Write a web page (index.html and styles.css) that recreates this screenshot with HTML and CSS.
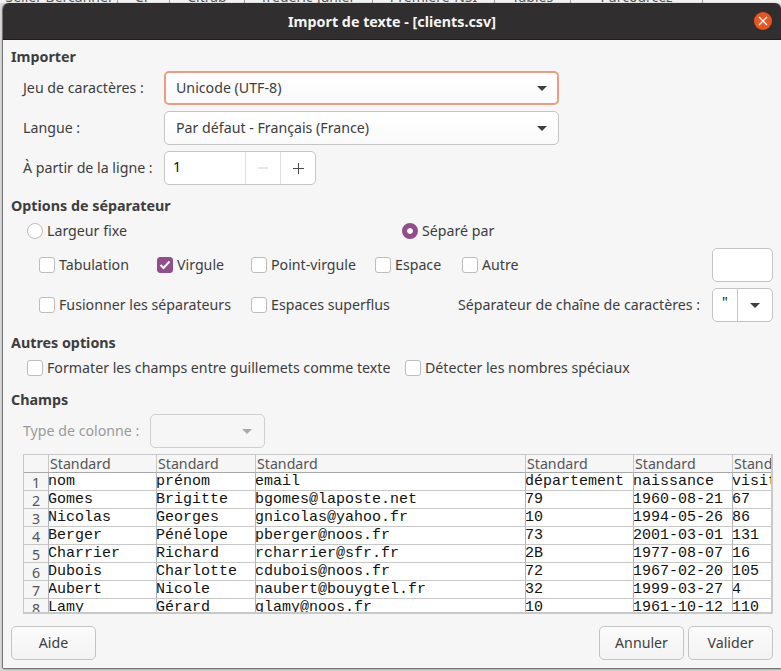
FILE: index.html
```html
<!DOCTYPE html>
<html lang="fr">
<head>
    <meta charset="UTF-8">
    <title>Import de texte - [clients.csv]</title>
    <link rel="stylesheet" href="styles.css">
</head>
<body>

<!-- Window behind the dialog, only its bottom edge shows -->
<div class="behind">
    <span class="behind-tab tab-a">Sélier Bercannel</span>
    <span class="behind-tab tab-b">CP</span>
    <span class="behind-tab tab-c">Citrab</span>
    <span class="behind-tab tab-d">frederic-junier</span>
    <span class="behind-tab tab-e">Premiere-NSI</span>
    <span class="behind-tab tab-f">Tables</span>
    <span class="behind-tab tab-g">Parcourcez</span>
</div>

<div class="dialog">
    <header class="titlebar">
        <span class="title">Import de texte - [clients.csv]</span>
        <span class="close">
            <svg width="10" height="10" viewBox="0 0 10 10"><path d="M1 1l8 8M9 1l-8 8" stroke="#fff" stroke-width="1.3" fill="none"/></svg>
        </span>
    </header>

    <main class="content">
        <h3 class="section first">Importer</h3>
        <div class="import-grid">
            <label>Jeu de caractères :</label>
            <div class="combo focused"><span>Unicode (UTF-8)</span><i class="arrow"></i></div>
            <label>Langue :</label>
            <div class="combo"><span>Par défaut - Français (France)</span><i class="arrow"></i></div>
            <label>À partir de la ligne :</label>
            <div class="spin">
                <span class="spin-value">1</span>
                <span class="spin-btn disabled">
                    <svg width="16" height="16" viewBox="0 0 16 16"><path d="M3 8h10" stroke="#cfcfcf" fill="none"/></svg>
                </span>
                <span class="spin-btn">
                    <svg width="16" height="16" viewBox="0 0 16 16"><path d="M3 8.5h11M8.500 3v11" stroke="#4a4a4a" fill="none"/></svg>
                </span>
            </div>
        </div>

        <h3 class="section sep-title">Options de séparateur</h3>
        <div class="radio-row">
            <label class="opt radio-fixed"><i class="radio"></i>Largeur fixe</label>
            <label class="opt"><i class="radio on"></i>Séparé par</label>
        </div>
        <div class="sep-grid">
            <label class="opt"><i class="check"></i>Tabulation</label>
            <label class="opt"><i class="check on"><svg width="12" height="12" viewBox="0 0 12 12"><path d="M1.500 6l3 3 6-6.500" stroke="#fff" stroke-width="2" fill="none"/></svg></i>Virgule</label>
            <label class="opt"><i class="check"></i>Point-virgule</label>
            <label class="opt"><i class="check"></i>Espace</label>
            <label class="opt"><i class="check"></i>Autre</label>
            <div class="entry"></div>

            <label class="opt merge"><i class="check"></i>Fusionner les séparateurs</label>
            <label class="opt"><i class="check"></i>Espaces superflus</label>
            <label class="quote-label">Séparateur de chaîne de caractères :</label>
            <div class="quote-combo"><span class="quote-value">"</span><span class="quote-btn"><i class="arrow"></i></span></div>
        </div>

        <h3 class="section other-title">Autres options</h3>
        <div class="other-row">
            <label class="opt"><i class="check"></i>Formater les champs entre guillemets comme texte</label>
            <label class="opt"><i class="check"></i>Détecter les nombres spéciaux</label>
        </div>

        <h3 class="section fields-title">Champs</h3>
        <div class="type-row">
            <label class="muted">Type de colonne :</label>
            <div class="combo off"><i class="arrow"></i></div>
        </div>

        <div class="grid-wrap">
            <table class="csv">
                <colgroup>
                    <col class="c-num"><col class="c-nom"><col class="c-prenom"><col class="c-email">
                    <col class="c-dep"><col class="c-date"><col class="c-visit">
                </colgroup>
                <thead>
                    <tr><th></th><th>Standard</th><th>Standard</th><th>Standard</th><th>Standard</th><th>Standard</th><th>Standard</th></tr>
                </thead>
                <tbody>
                    <tr><th>1</th><td>nom</td><td>prénom</td><td>email</td><td>département</td><td>naissance</td><td>visites</td></tr>
                    <tr><th>2</th><td>Gomes</td><td>Brigitte</td><td>bgomes@laposte.net</td><td>79</td><td>1960-08-21</td><td>67</td></tr>
                    <tr><th>3</th><td>Nicolas</td><td>Georges</td><td>gnicolas@yahoo.fr</td><td>10</td><td>1994-05-26</td><td>86</td></tr>
                    <tr><th>4</th><td>Berger</td><td>Pénélope</td><td>pberger@noos.fr</td><td>73</td><td>2001-03-01</td><td>131</td></tr>
                    <tr><th>5</th><td>Charrier</td><td>Richard</td><td>rcharrier@sfr.fr</td><td>2B</td><td>1977-08-07</td><td>16</td></tr>
                    <tr><th>6</th><td>Dubois</td><td>Charlotte</td><td>cdubois@noos.fr</td><td>72</td><td>1967-02-20</td><td>105</td></tr>
                    <tr><th>7</th><td>Aubert</td><td>Nicole</td><td>naubert@bouygtel.fr</td><td>32</td><td>1999-03-27</td><td>4</td></tr>
                    <tr><th>8</th><td>Lamy</td><td>Gérard</td><td>glamy@noos.fr</td><td>10</td><td>1961-10-12</td><td>110</td></tr>
                </tbody>
            </table>
        </div>

        <footer class="buttons">
            <button type="button">Aide</button>
            <span class="spacer"></span>
            <button type="button">Annuler</button>
            <button type="button">Valider</button>
        </footer>
    </main>
</div>

</body>
</html>
```

FILE: styles.css
```css
/* Global styles */
body {
    margin: 0;
    width: 781px;
    height: 671px;
    overflow: hidden;
    position: relative;
    background: #d9d9d9;
    font-family: 'Noto Sans', sans-serif;
    font-size: 14.2px;
    color: #3d3d3d;
}

/* Window behind */
.behind {
    position: absolute;
    top: -10px;
    left: 0;
    display: flex;
    height: 13px;
    width: 781px;
    background: #f2f2f2;
    font-size: 14px;
    line-height: 13px;
    color: #555;
    overflow: hidden;
}

.behind-tab {
    box-sizing: border-box;
    border-right: 1px solid #9a9a9a;
    white-space: nowrap;
    text-align: center;
}

.tab-a { width: 118px; }
.tab-b { width: 52px; }
.tab-c { width: 75px; }
.tab-d { width: 128px; }
.tab-e { width: 122px; }
.tab-f { width: 76px; }
.tab-g { width: 132px; }

/* Dialog window */
.dialog {
    position: absolute;
    top: 3px;
    left: 3px;
    width: 778px;
    height: 665px;
    display: flex;
    flex-direction: column;
    border-radius: 6px 6px 0 0;
    overflow: hidden;
    box-shadow: 0 1px 2px rgba(0, 0, 0, 0.6), -1px 0 1px rgba(0, 0, 0, 0.4);
}

.titlebar {
    flex: none;
    height: 36px;
    display: flex;
    align-items: center;
    justify-content: center;
    position: relative;
    background: #302e2f;
    border-bottom: 1px solid #1f1e1e;
}

.title {
    color: #f5f5f5;
    font-size: 14.3px;
    font-weight: 700;
}

.close {
    position: absolute;
    right: 9px;
    top: 9px;
    width: 18px;
    height: 18px;
    border-radius: 50%;
    background: #e95420;
    display: flex;
    align-items: center;
    justify-content: center;
}

.content {
    flex: 1;
    background: #f6f6f6;
    padding: 8px 8px 0 8px;
}

/* Section titles */
.section {
    margin: 0;
    height: 18px;
    line-height: 18px;
    font-size: 14.3px;
    font-weight: 700;
}

.import-grid {
    margin: 5px 0 0 12px;
    display: grid;
    grid-template-columns: 141px 395px;
    grid-auto-rows: 34px;
    row-gap: 6px;
    align-items: center;
}

.import-grid label,
.type-row label,
.quote-label {
    padding-bottom: 2px;
}

.sep-title { margin-top: 12px; }
.other-title { margin-top: 12px; }
.fields-title { margin-top: 14px; }

/* Combos */
.combo {
    box-sizing: border-box;
    height: 34px;
    display: flex;
    align-items: center;
    justify-content: space-between;
    padding: 0 11px 0 11px;
    background: linear-gradient(#ffffff, #fafafa);
    border: 1px solid #c4c4c4;
    border-radius: 5px;
}

.combo span {
    padding-bottom: 2px;
}

.combo.focused {
    border: 2px solid #ec9c83;
    padding: 0 10px 0 10px;
}

.combo.off {
    justify-content: flex-end;
    background: #f6f6f6;
    border-color: #cfcfcf;
    padding-right: 12px;
}

.combo.off .arrow {
    border-top-color: #a8a8a8;
}

.arrow {
    display: block;
    width: 0;
    height: 0;
    border-left: 5px solid transparent;
    border-right: 5px solid transparent;
    border-top: 5px solid #3d3d3d;
}

.spin {
    box-sizing: border-box;
    width: 152px;
    height: 34px;
    display: flex;
    background: #fff;
    border: 1px solid #c4c4c4;
    border-radius: 5px;
}

.spin-value {
    box-sizing: border-box;
    width: 80px;
    padding-left: 8px;
    line-height: 30px;
    color: #111;
}

.spin-btn {
    flex: 1;
    display: flex;
    align-items: center;
    justify-content: center;
    border-left: 1px solid #dedede;
}

/* Options */
.opt {
    display: flex;
    align-items: flex-start;
    gap: 4px;
    line-height: 16px;
    white-space: nowrap;
}

.radio-row {
    margin: 7px 0 0 16px;
    height: 18px;
    display: grid;
    grid-template-columns: 375px auto;
    align-items: center;
}

.radio {
    flex: none;
    box-sizing: border-box;
    width: 16px;
    height: 16px;
    border-radius: 50%;
    background: #fff;
    border: 1px solid #bdbdbd;
    display: block;
}

.radio.on {
    background: #924d8b;
    border: 5px solid #924d8b;
    box-shadow: inset 0 0 0 3px #fff;
}

.check {
    flex: none;
    box-sizing: border-box;
    width: 16px;
    height: 16px;
    border-radius: 3px;
    background: #fff;
    border: 1px solid #bdbdbd;
    display: flex;
    align-items: center;
    justify-content: center;
}

.check.on {
    background: #924d8b;
    border-color: #924d8b;
}

.sep-grid {
    margin: 8px 0 0 28px;
    display: grid;
    grid-template-columns: 118px 94px 124px 87px 250px 61px;
    grid-auto-rows: 34px;
    row-gap: 6px;
    align-items: center;
}

.merge { grid-column: span 2; }

.quote-label {
    grid-column: 4 / span 2;
    justify-self: end;
    margin-right: 12px;
    white-space: nowrap;
}

.entry,
.quote-combo {
    box-sizing: border-box;
    height: 34px;
    background: #fff;
    border: 1px solid #c4c4c4;
    border-radius: 5px;
}

.quote-combo {
    display: flex;
}

.quote-value {
    width: 24px;
    text-align: center;
    line-height: 26px;
    color: #111;
    border-right: 1px solid #c4c4c4;
}

.quote-btn {
    flex: 1;
    display: flex;
    align-items: center;
    justify-content: center;
}

.other-row {
    margin: 7px 0 0 16px;
    height: 18px;
    display: grid;
    grid-template-columns: 378px auto;
    align-items: center;
}

.type-row {
    margin: 5px 0 0 12px;
    display: grid;
    grid-template-columns: 127px 115px;
    align-items: center;
}

.muted {
    color: #9a9a9a;
}

/* CSV preview */
.grid-wrap {
    box-sizing: border-box;
    margin: 6px 0 0 12px;
    width: 750px;
    height: 160px;
    overflow: hidden;
    background: #fff;
    border: 1px solid #c8c8c8;
    border-bottom-width: 2px;
    border-right-width: 2px;
}

.csv {
    table-layout: fixed;
    width: 760px;
    border-collapse: separate;
    border-spacing: 0;
}

.c-num { width: 24px; }
.c-nom { width: 108px; }
.c-prenom { width: 99px; }
.c-email { width: 270px; }
.c-dep { width: 108px; }
.c-date { width: 99px; }
.c-visit { width: 52px; }

.csv thead th {
    box-sizing: border-box;
    height: 18px;
    padding: 0 0 0 1px;
    background: #f6f6f6;
    border-left: 1px solid #c8c8c8;
    border-bottom: 1px solid #a8a8a8;
    font-size: 14.2px;
    font-weight: 400;
    line-height: 17px;
    text-align: left;
    color: #555;
    overflow: hidden;
    white-space: nowrap;
}

.csv thead th:first-child {
    border-left: none;
}

.csv tbody th {
    box-sizing: border-box;
    height: 18px;
    padding: 2px 0 0 0;
    background: #f6f6f6;
    border-bottom: 1px solid #c8c8c8;
    font-size: 14.2px;
    font-weight: 400;
    line-height: 15px;
    color: #555;
    overflow: hidden;
}

.csv td {
    box-sizing: border-box;
    height: 18px;
    padding: 1px 0 0 0;
    border-left: 1px solid #b4b4b4;
    border-bottom: 1px solid #c8c8c8;
    font-family: 'Liberation Mono', monospace;
    font-size: 15px;
    line-height: 15px;
    text-indent: -1px;
    color: #111;
    white-space: nowrap;
    overflow: hidden;
    vertical-align: top;
}

/* Bottom buttons */
.buttons {
    margin-top: 12px;
    display: flex;
    gap: 4px;
    width: 762px;
}

.spacer {
    flex: 1;
}

.buttons button {
    box-sizing: border-box;
    width: 85px;
    height: 34px;
    padding: 0 0 2px;
    background: linear-gradient(#fbfbfb, #f3f3f3);
    border: 1px solid #c4c4c4;
    border-radius: 5px;
    font-family: inherit;
    font-size: 14.2px;
    color: #3d3d3d;
}
```
